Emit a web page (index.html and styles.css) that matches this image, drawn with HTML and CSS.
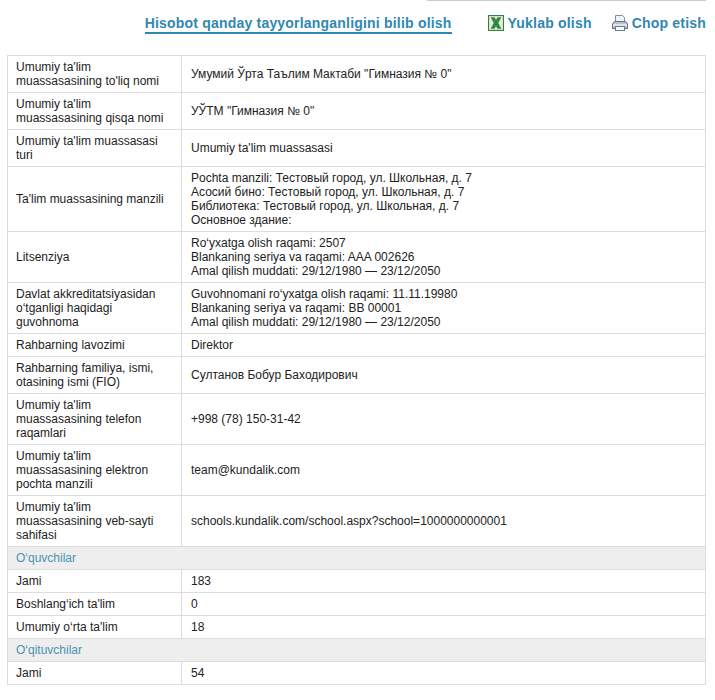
FILE: index.html
```html
<!DOCTYPE html>
<html lang="uz">
<head>
<meta charset="utf-8">
<title>Hisobot</title>
<link rel="stylesheet" href="styles.css">
</head>
<body>
<div class="page">
  <div class="topline"></div>
  <div class="toolbar">
    <a class="link howto" href="#">Hisobot qanday tayyorlanganligini bilib olish</a>
    <a class="link action" href="#">
      <svg class="icon" width="16" height="16" viewBox="0 0 16 16">
        <rect x="0.5" y="0.5" width="15" height="15" fill="#cfe3c4" stroke="#3c7f45"/>
        <rect x="2" y="2" width="12" height="12" fill="#eaf3e4"/>
        <path d="M3 2.5H6.5L8 5.5L9.5 2.5H13L10 8L13 13.5H9.5L8 10.5L6.5 13.5H3L6 8Z" fill="#2e8b3c" stroke="#1f6e2c" stroke-width="0.4"/>
      </svg>
      <span>Yuklab olish</span>
    </a>
    <a class="link action" href="#">
      <svg class="icon" width="16" height="16" viewBox="0 0 16 16">
        <path d="M3.5 8V0.5H10.5L12.5 2.5V8Z" fill="#eef3fa" stroke="#7f8fa3"/>
        <path d="M2.5 6.5H13.5L15.5 9V13.5H0.5V9Z" fill="#b9c2cc" stroke="#66707c"/>
        <rect x="1" y="9" width="14" height="2" fill="#dfe4e9"/>
        <rect x="3.5" y="11.5" width="9" height="4" fill="#f7f8fa" stroke="#6f7a87"/>
      </svg>
      <span>Chop etish</span>
    </a>
  </div>
  <table class="report">
    <colgroup><col class="col-label"><col></colgroup>
    <tbody>
      <tr><td>Umumiy ta'lim muassasasining to'liq nomi</td><td>Умумий Ўрта Таълим Мактаби "Гимназия № 0"</td></tr>
      <tr><td>Umumiy ta'lim muassasasining qisqa nomi</td><td>УЎТМ "Гимназия № 0"</td></tr>
      <tr><td>Umumiy ta'lim muassasasi turi</td><td>Umumiy ta'lim muassasasi</td></tr>
      <tr><td>Ta'lim muassasining manzili</td><td>Pochta manzili: Тестовый город, ул. Школьная, д. 7<br>Асосий бино: Тестовый город, ул. Школьная, д. 7<br>Библиотека: Тестовый город, ул. Школьная, д. 7<br>Основное здание:</td></tr>
      <tr><td>Litsenziya</td><td>Ro‘yxatga olish raqami: 2507<br>Blankaning seriya va raqami: AAA 002626<br>Amal qilish muddati: 29/12/1980 — 23/12/2050</td></tr>
      <tr><td>Davlat akkreditatsiyasidan o‘tganligi haqidagi guvohnoma</td><td>Guvohnomani ro‘yxatga olish raqami: 11.11.19980<br>Blankaning seriya va raqami: BB 00001<br>Amal qilish muddati: 29/12/1980 — 23/12/2050</td></tr>
      <tr><td>Rahbarning lavozimi</td><td>Direktor</td></tr>
      <tr><td>Rahbarning familiya, ismi, otasining ismi (FIO)</td><td>Султанов Бобур Баходирович</td></tr>
      <tr><td>Umumiy ta'lim muassasasining telefon raqamlari</td><td>+998 (78) 150-31-42</td></tr>
      <tr><td>Umumiy ta'lim muassasasining elektron pochta manzili</td><td>team@kundalik.com</td></tr>
      <tr><td>Umumiy ta'lim muassasasining veb-sayti sahifasi</td><td>schools.kundalik.com/school.aspx?school=1000000000001</td></tr>
      <tr class="section"><td colspan="2">O‘quvchilar</td></tr>
      <tr><td>Jami</td><td>183</td></tr>
      <tr><td>Boshlang‘ich ta'lim</td><td>0</td></tr>
      <tr><td>Umumiy o‘rta ta'lim</td><td>18</td></tr>
      <tr class="section"><td colspan="2">O‘qituvchilar</td></tr>
      <tr><td>Jami</td><td>54</td></tr>
    </tbody>
  </table>
</div>
</body>
</html>
```
FILE: styles.css
```css
html, body {
  margin: 0;
  padding: 0;
  background: #fff;
}
.page {
  width: 715px;
  height: 700px;
  box-sizing: border-box;
  padding: 0 9px 0 7px;
  overflow: hidden;
  font-family: "Liberation Sans", Arial, sans-serif;
  font-size: 12px;
  line-height: 14px;
  color: #222;
}
.topline {
  height: 1px;
  margin-left: 420px;
  background: #ccc;
}
.toolbar {
  display: flex;
  justify-content: flex-end;
  align-items: flex-start;
  gap: 20px;
  height: 54px;
  padding-top: 14px;
  box-sizing: border-box;
}
.link {
  font-size: 14px;
  line-height: 16px;
  font-weight: bold;
  letter-spacing: 0.2px;
  color: #2f88b0;
  text-decoration: none;
}
.howto {
  margin-right: 16px;
  padding-bottom: 1px;
  border-bottom: 2px solid #2f88b0;
}
.action {
  display: flex;
  align-items: center;
  gap: 4px;
}
.icon {
  display: block;
  flex: none;
}
.report {
  width: 699px;
  table-layout: fixed;
  border-collapse: collapse;
  border-spacing: 0;
}
.col-label {
  width: 174px;
}
.report td {
  padding: 4px 8px 4px 9px;
  border: 1px solid #ddd;
  vertical-align: middle;
}
.report td:first-child {
  padding-left: 8px;
}
.section td {
  background: #eee;
  color: #4a93b5;
}
```
